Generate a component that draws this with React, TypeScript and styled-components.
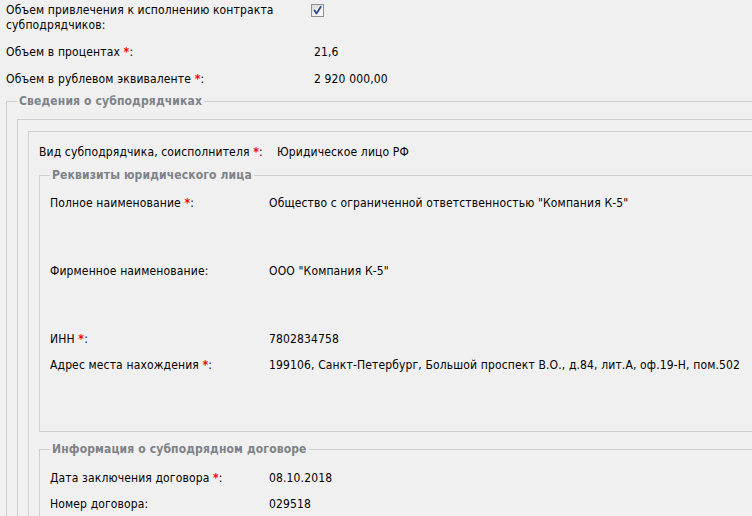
import React from "react";
import styled, { createGlobalStyle } from "styled-components";

const Global = createGlobalStyle`
  html, body {
    margin: 0;
    padding: 0;
    background: #f0f0f0;
    overflow: hidden;
  }
  body {
    font-family: "DejaVu Sans Condensed", "DejaVu Sans", Tahoma, sans-serif;
    font-size: 12px;
    line-height: 15px;
    letter-spacing: 0.14px;
    color: #000;
  }
`;

const Page = styled.div`
  width: 900px;
  padding: 3px 0 0 6px;
`;

const TopGrid = styled.div`
  display: grid;
  grid-template-columns: 308px 1fr;
  row-gap: 12px;
  margin-bottom: 7px;
`;

const Label = styled.div`
  white-space: normal;
`;

const Value = styled.div`
  white-space: nowrap;
`;

const Req = styled.span`
  color: #ff0000;
  font-weight: bold;
`;

const CheckBox = styled.span`
  display: inline-block;
  width: 11px;
  height: 11px;
  margin: 1px 0 0 -3px;
  border: 1px solid #8e8f8f;
  background: linear-gradient(135deg, #d8d8d8 0%, #f2f2f2 60%, #ffffff 100%);
  svg {
    display: block;
  }
`;

const FieldSet = styled.fieldset<{ $pt?: number; $pb?: number }>`
  margin: 0;
  border: 1px solid #cfcfcf;
  padding: ${(p) => p.$pt ?? 10}px 10px ${(p) => p.$pb ?? 10}px 10px;
  min-width: 0;
`;

const Legend = styled.legend`
  padding: 0 2px;
  font-weight: bold;
  color: #7d8288;
  line-height: 15px;
`;

const Box = styled.div<{ $pt?: number }>`
  border: 1px solid #cfcfcf;
  padding: ${(p) => p.$pt ?? 10}px 10px 10px 10px;
`;

const KindRow = styled.div`
  display: grid;
  grid-template-columns: 238px 1fr;
  margin-bottom: 8px;
`;

const Rows = styled.div`
  display: grid;
  grid-template-columns: 219px 1fr;
  row-gap: 10.5px;
`;

const Cell = styled.div<{ $tall?: boolean }>`
  min-height: ${(p) => (p.$tall ? "57.5px" : "15px")};
  white-space: nowrap;
`;

const Spacer = styled.div<{ $h: number }>`
  height: ${(p) => p.$h}px;
`;

const Check = () => (
  <CheckBox>
    <svg width="11" height="11" viewBox="0 0 11 11">
      <path
        d="M2.5 5.5 L4.5 8.5 L8.8 1.8"
        fill="none"
        stroke="#2c4a95"
        strokeWidth="1.8"
        strokeLinecap="round"
        strokeLinejoin="round"
      />
    </svg>
  </CheckBox>
);

type Row = { label: string; req?: boolean; value: string; tall?: boolean };

const reqRows: Row[] = [
  {
    label: "Полное наименование",
    req: true,
    value: 'Общество с ограниченной ответственностью "Компания К-5"',
    tall: true,
  },
  { label: "Фирменное наименование", value: 'ООО "Компания К-5"', tall: true },
  { label: "ИНН", req: true, value: "7802834758" },
  {
    label: "Адрес места нахождения",
    req: true,
    value:
      "199106, Санкт-Петербург, Большой проспект В.О., д.84, лит.А, оф.19-Н, пом.502",
    tall: true,
  },
];

const contractRows: Row[] = [
  { label: "Дата заключения договора", req: true, value: "08.10.2018" },
  { label: "Номер договора", value: "029518" },
];

const LabelText = ({ label, req }: { label: string; req?: boolean }) => (
  <>
    {label}
    {req ? (
      <>
        {" "}
        <Req>*</Req>
      </>
    ) : null}
    :
  </>
);

const RowList = ({ rows }: { rows: Row[] }) => (
  <Rows>
    {rows.map((r) => (
      <React.Fragment key={r.label}>
        <Cell $tall={r.tall}>
          <LabelText label={r.label} req={r.req} />
        </Cell>
        <Cell $tall={r.tall}>{r.value}</Cell>
      </React.Fragment>
    ))}
  </Rows>
);

export default function App() {
  return (
    <>
      <Global />
      <Page>
        <TopGrid>
          <Label>
            Объем привлечения к исполнению контракта субподрядчиков:
          </Label>
          <Value>
            <Check />
          </Value>
          <Label>
            <LabelText label="Объем в процентах" req />
          </Label>
          <Value>21,6</Value>
          <Label>
            <LabelText label="Объем в рублевом эквиваленте" req />
          </Label>
          <Value>2 920 000,00</Value>
        </TopGrid>
        <FieldSet $pt={10}>
          <Legend>Сведения о субподрядчиках</Legend>
          <Box $pt={11}>
            <Box $pt={13}>
              <KindRow>
                <Label>
                  <LabelText label="Вид субподрядчика, соисполнителя" req />
                </Label>
                <Value>Юридическое лицо РФ</Value>
              </KindRow>
              <FieldSet $pt={13} $pb={16}>
                <Legend>Реквизиты юридического лица</Legend>
                <RowList rows={reqRows} />
              </FieldSet>
              <Spacer $h={10} />
              <FieldSet $pt={14}>
                <Legend>Информация о субподрядном договоре</Legend>
                <RowList rows={contractRows} />
              </FieldSet>
            </Box>
          </Box>
        </FieldSet>
      </Page>
    </>
  );
}
